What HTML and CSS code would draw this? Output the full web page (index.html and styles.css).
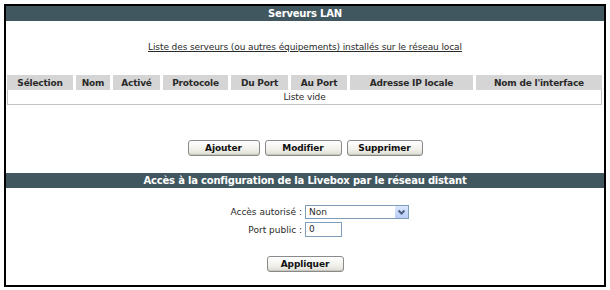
FILE: index.html
```html
<!DOCTYPE html>
<html lang="fr">
<head>
    <meta charset="UTF-8">
    <title>Serveurs LAN</title>
    <link rel="stylesheet" href="styles.css">
</head>
<body>
    <div class="panel">
        <h2 class="bar">Serveurs LAN</h2>
        <p class="intro"><a href="#">Liste des serveurs (ou autres équipements) installés sur le réseau local</a></p>

        <table class="list">
            <colgroup>
                <col style="width:66px"><col style="width:37px"><col style="width:50px"><col style="width:68px">
                <col style="width:60px"><col style="width:59px"><col style="width:126px"><col style="width:129px">
            </colgroup>
            <thead>
                <tr>
                    <th>Sélection</th>
                    <th>Nom</th>
                    <th>Activé</th>
                    <th>Protocole</th>
                    <th>Du Port</th>
                    <th>Au Port</th>
                    <th>Adresse IP locale</th>
                    <th>Nom de l'interface</th>
                </tr>
            </thead>
            <tbody>
                <tr><td colspan="8" class="empty">Liste vide</td></tr>
            </tbody>
        </table>

        <div class="actions first">
            <button class="btn w72">Ajouter</button>
            <button class="btn w77">Modifier</button>
            <button class="btn w75">Supprimer</button>
        </div>

        <h2 class="bar">Accès à la configuration de la Livebox par le réseau distant</h2>

        <div class="form">
            <div class="row">
                <label class="lbl">Accès autorisé :</label>
                <div class="select">
                    <span class="val">Non</span>
                    <span class="arrow">
                        <svg width="13" height="12" viewBox="0 0 13 12">
                            <path d="M3.5 4.5 L6.5 7.5 L9.5 4.5" fill="none" stroke="#4d6185" stroke-width="2"/>
                        </svg>
                    </span>
                </div>
            </div>
            <div class="row">
                <label class="lbl">Port public :</label>
                <div class="field">0</div>
            </div>
        </div>

        <div class="actions last">
            <button class="btn w77">Appliquer</button>
        </div>
    </div>
</body>
</html>
```

FILE: styles.css
```css
body{
    margin: 0;
    background: #fff;
    font-family: "DejaVu Sans", Verdana, sans-serif;
    font-size: 9px;
    color: #2a2a2a;
}
.panel{
    margin: 4px;
    width: 598px;
    height: 279px;
    border: 2px solid #000;
}
.bar{
    margin: 0;
    height: 15px;
    line-height: 15px;
    background: #41575f;
    color: #fff;
    font-size: 10px;
    font-weight: bold;
    text-align: center;
    letter-spacing: -0.2px;
}
.intro{
    margin: 0;
    padding-top: 20px;
    height: 34px;
    line-height: 12px;
    text-align: center;
    letter-spacing: -0.1px;
}
.intro a{
    color: #2a2a2a;
}
.list{
    margin-left: 1px;
    width: 595px;
    table-layout: fixed;
    border-collapse: separate;
    border-spacing: 0;
}
.list th{
    box-sizing: border-box;
    height: 15px;
    padding: 0;
    background: #d5d5d5;
    border-left: 3px solid #fff;
    font-size: 9px;
    font-weight: bold;
    text-align: center;
    letter-spacing: -0.2px;
}
.list th:first-child{
    border-left: none;
}
.list .empty{
    height: 14px;
    padding: 0;
    border: 1px solid #c4c4c4;
    border-top: none;
    text-align: center;
    letter-spacing: -0.1px;
}
.actions{
    display: flex;
    justify-content: center;
    gap: 5px;
}
.actions.first{
    margin-top: 35px;
    margin-bottom: 17px;
}
.actions.last{
    margin-top: 19px;
}
.btn{
    height: 16px;
    padding: 0;
    border: 1px solid #8a8a8a;
    border-radius: 3px;
    background: linear-gradient(#ffffff, #f1f0ea 60%, #dcdbd3);
    box-shadow: inset 0 -1px 0 #c9c8bf;
    font-family: inherit;
    font-size: 9px;
    font-weight: bold;
    color: #111;
    letter-spacing: -0.1px;
}
.w72{ width: 72px; }
.w75{ width: 76px; }
.w77{ width: 77px; }
.form{
    padding-top: 17px;
    display: flex;
    flex-direction: column;
    gap: 3px;
}
.row{
    display: flex;
    align-items: center;
    gap: 3px;
}
.lbl{
    width: 296px;
    text-align: right;
    letter-spacing: 0;
}
.select{
    box-sizing: border-box;
    width: 104px;
    height: 14px;
    border: 1px solid #7f9db9;
    display: flex;
    align-items: center;
    justify-content: space-between;
}
.select .val{
    padding-left: 3px;
}
.select .arrow{
    width: 13px;
    height: 12px;
    background: linear-gradient(#dbe7fd, #b8cdf7);
    border-radius: 1px;
    display: flex;
}
.field{
    box-sizing: border-box;
    width: 37px;
    height: 15px;
    line-height: 13px;
    padding-left: 3px;
    border: 1px solid #7f9db9;
}
```
